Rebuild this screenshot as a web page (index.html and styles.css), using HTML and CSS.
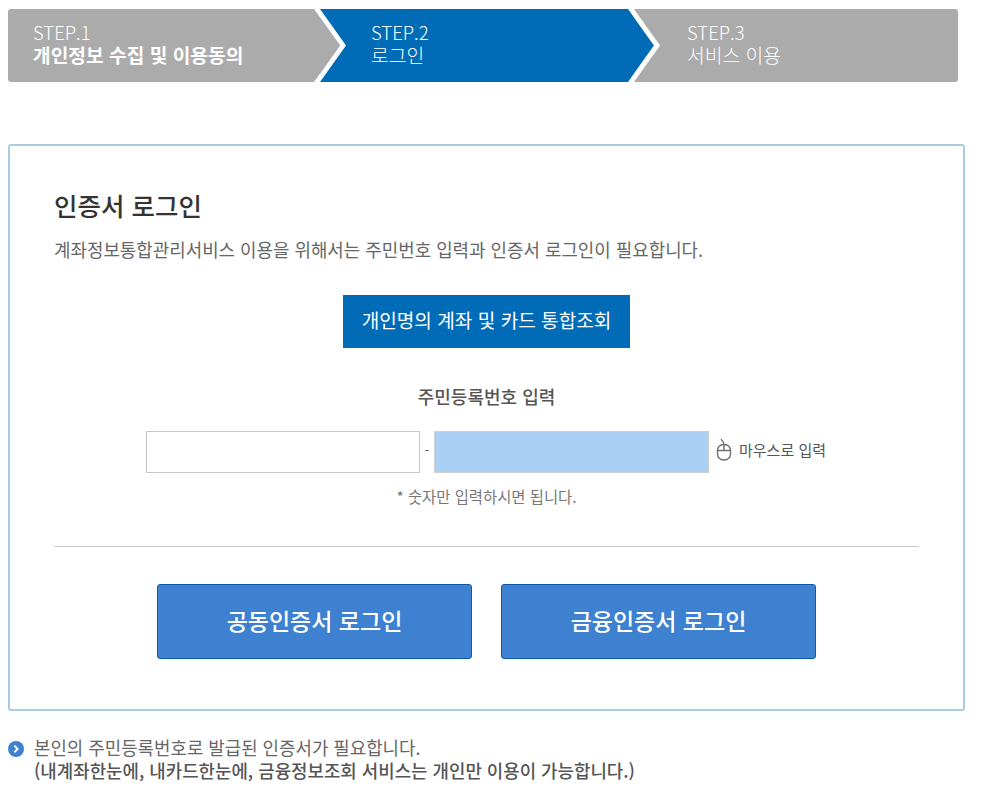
FILE: index.html
```html
<!DOCTYPE html>
<html lang="ko">
<head>
<meta charset="utf-8">
<title>인증서 로그인</title>
<link rel="stylesheet" href="styles.css">
</head>
<body>
<div class="page">
  <ol class="steps">
    <li class="step step-one">
      <span class="step-no">STEP.1</span>
      <strong class="step-name">개인정보 수집 및 이용동의</strong>
      <svg class="chevron" width="32" height="73" viewBox="0 0 32 73"><polygon points="0,0 26,36.5 0,73" fill="#ababab"/><polygon points="0,0 6,0 32,36.5 6,73 0,73 26,36.5" fill="#fff"/></svg>
    </li>
    <li class="step step-two">
      <span class="step-no">STEP.2</span>
      <span class="step-name">로그인</span>
      <svg class="chevron" width="32" height="73" viewBox="0 0 32 73"><polygon points="0,0 26,36.5 0,73" fill="#006cb7"/><polygon points="0,0 6,0 32,36.5 6,73 0,73 26,36.5" fill="#fff"/></svg>
    </li>
    <li class="step step-three">
      <span class="step-no">STEP.3</span>
      <span class="step-name">서비스 이용</span>
    </li>
  </ol>

  <section class="card">
    <h1 class="title">인증서 로그인</h1>
    <p class="desc">계좌정보통합관리서비스 이용을 위해서는 주민번호 입력과 인증서 로그인이 필요합니다.</p>
    <div class="center"><button class="query-btn" type="button">개인명의 계좌 및 카드 통합조회</button></div>
    <h2 class="id-label">주민등록번호 입력</h2>
    <div class="id-row">
      <input class="id-input" type="text" aria-label="주민등록번호 앞자리">
      <span class="dash">-</span>
      <input class="id-input id-back" type="text" aria-label="주민등록번호 뒷자리">
      <span class="mouse-entry">
        <svg class="mouse" width="16" height="24" viewBox="0 0 16 24" fill="none" stroke="#707070" stroke-width="1.4"><path d="M5.5 1c-1 1.500 2.500 2 2.500 5.500"/><rect x="1.500" y="6.500" width="13" height="15.500" rx="6"/><path d="M1.800 12.500h12.400M8 6.500v6"/></svg>
        마우스로 입력
      </span>
    </div>
    <p class="note">* 숫자만 입력하시면 됩니다.</p>
    <hr class="divider">
    <div class="login-row">
      <button class="login-btn" type="button">공동인증서 로그인</button>
      <button class="login-btn" type="button">금융인증서 로그인</button>
    </div>
  </section>

  <div class="notice">
    <svg class="notice-icon" width="16" height="16" viewBox="0 0 16 16"><circle cx="8" cy="8" r="8" fill="#3e81d0"/><path d="M6.300 4.600 9.600 8l-3.300 3.400" fill="none" stroke="#fff" stroke-width="2"/></svg>
    <p class="notice-text">본인의 주민등록번호로 발급된 인증서가 필요합니다.<br><strong>(내계좌한눈에, 내카드한눈에, 금융정보조회 서비스는 개인만 이용이 가능합니다.)</strong></p>
  </div>
</div>
</body>
</html>
```
FILE: styles.css
```css
* { box-sizing: border-box; }
html, body { margin: 0; padding: 0; background: #fff; }
body { font-family: "Noto Sans CJK KR", "Noto Sans", sans-serif; color: #555; }
.page { padding: 9px 0 0 8px; width: 1001px; }

.steps { list-style: none; margin: 0; padding: 0; display: flex; width: 950px; height: 73px; }
.step { position: relative; display: flex; flex-direction: column; color: #fff; font-size: 18.5px; line-height: 22px; padding-top: 12px; }
.step-no, .step-name { display: block; font-weight: 300; white-space: nowrap; }
.step-name { font-size: 19.3px; margin-top: 1px; }
strong.step-name { font-weight: 700; font-size: 19.2px; }
.step-one { width: 312px; padding-left: 25px; background: #ababab; border-radius: 3px 0 0 3px; }
.step-two { width: 314px; padding-left: 51px; background: #006cb7; }
.step-three { flex: 1; padding-left: 53px; background: #ababab; border-radius: 0 3px 3px 0; }
.chevron { position: absolute; top: 0; right: -26px; z-index: 1; }

.card { width: 957px; height: 567px; margin-top: 62px; padding: 0 44px; border: 2px solid #a8cce4; border-radius: 3px; }
.title { margin: 41px 0 0; font-size: 25.5px; line-height: 36px; font-weight: 500; color: #333; }
.desc { margin: 14px 0 0; font-size: 17.9px; line-height: 24px; color: #666; }
.center { display: flex; justify-content: center; margin-top: 34px; }
.query-btn { width: 287px; height: 53px; border: 0; background: #006cb7; color: #fff; font: 400 19.1px/24px "Noto Sans CJK KR", sans-serif; padding: 0 0 4px; }
.id-label { margin: 35px 0 0; text-align: center; font-size: 18px; line-height: 26px; font-weight: 500; color: #555; }
.id-row { display: flex; align-items: center; margin: 22px 0 0 92px; }
.id-input { width: 274px; height: 42px; border: 1px solid #c8c8c8; background: #fff; padding: 0; margin: 0; outline: 0; }
.id-back { width: 275px; background: #aacff5; border-color: #cfcfcf; }
.dash { width: 14px; margin-bottom: 4px; text-align: center; font-size: 14px; color: #666; }
.mouse-entry { display: flex; align-items: center; gap: 7px; margin: 0 0 5px 7px; font-size: 15px; color: #555; white-space: nowrap; }
.note { margin: 13px 0 0; text-align: center; font-size: 15.4px; line-height: 20px; color: #777; }
.divider { margin: 40px 0 0; border: 0; border-top: 1px solid #ccc; }
.login-row { display: flex; justify-content: center; gap: 29px; margin-top: 37px; }
.login-btn { width: 315px; height: 75px; border: 1px solid #0a5ca8; border-radius: 3px; background: #3e81d0; color: #fff; font: 500 23px/30px "Noto Sans CJK KR", sans-serif; padding: 0 0 3px; }

.notice { display: flex; align-items: flex-start; gap: 10px; margin-top: 25px; }
.notice-icon { margin-top: 5px; flex: none; }
.notice-text { margin: 0; font-size: 17.87px; line-height: 23px; color: #666; }
.notice-text strong { font-weight: 500; color: #555; }
```
